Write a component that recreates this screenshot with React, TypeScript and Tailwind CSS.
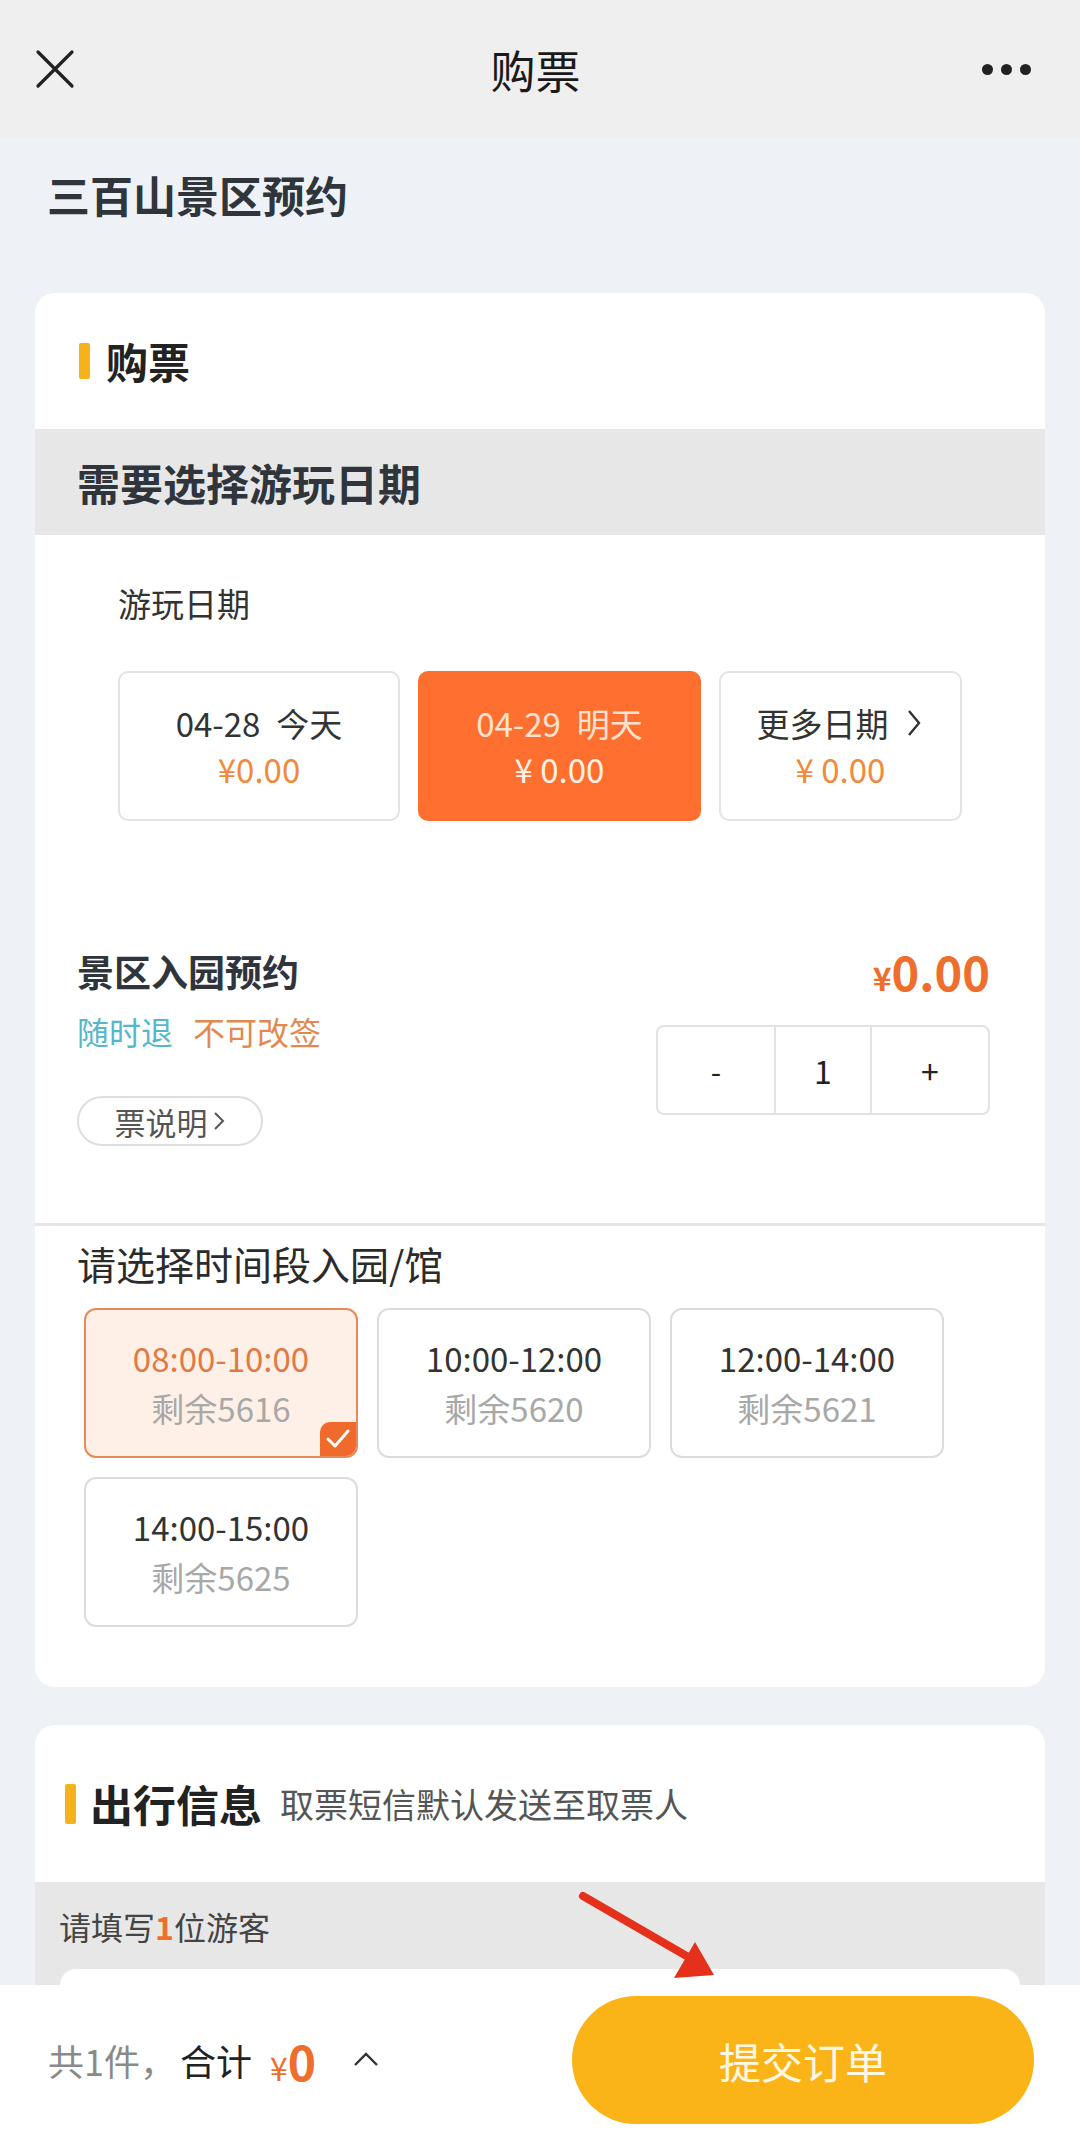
import React from "react";

const FONT = { fontFamily: '"Noto Sans CJK SC", "Noto Sans", sans-serif' };

function DateBox({ label, day, price, active, w, more }: { label: string; day?: string; price: string; active?: boolean; w: string; more?: boolean }) {
  return (
    <div
      className={`${w} h-[150px] rounded-[10px] flex flex-col items-center justify-center ${
        active ? "bg-[#ff6f2f] border-2 border-[#ff6f2f]" : "bg-white border-2 border-[#e3e3e3]"
      }`}
    >
      <div className={`flex items-center text-[33px] leading-[42px] ${active ? "text-[#ffe3cf]" : "text-[#333]"}`}>
        <span>{label}</span>
        {day && <span className="ml-[16px]">{day}</span>}
        {more && (
          <svg width="22" height="32" viewBox="0 0 22 32" className="ml-[14px]">
            <path d="M6 4 L16 16 L6 28" fill="none" stroke="#333" strokeWidth="2.4" />
          </svg>
        )}
      </div>
      <div className={`mt-[4px] text-[33px] leading-[42px] ${active ? "text-[#fff1e6]" : "text-[#ef8a3e]"}`}>{price}</div>
    </div>
  );
}

function Slot({ time, left, selected }: { time: string; left: string; selected?: boolean }) {
  return (
    <div
      className={`relative w-[274px] h-[150px] rounded-[12px] flex flex-col items-center justify-center overflow-hidden ${
        selected ? "bg-[#fff0e7] border-2 border-[#e48a5c]" : "bg-white border-2 border-[#dcdcdc]"
      }`}
    >
      <div className={`text-[33px] leading-[50px] ${selected ? "text-[#e07a45]" : "text-[#333]"}`}>{time}</div>
      <div className="text-[33px] leading-[50px] text-[#a8a8a8]">{left}</div>
      {selected && (
        <div className="absolute right-0 bottom-0 w-[36px] h-[34px] bg-[#f06a2c] rounded-tl-[10px] flex items-center justify-center">
          <svg width="26" height="22" viewBox="0 0 26 22">
            <path d="M3 11 L10 18 L23 3" fill="none" stroke="#fff" strokeWidth="3" strokeLinecap="round" strokeLinejoin="round" />
          </svg>
        </div>
      )}
    </div>
  );
}

export default function App() {
  return (
    <div className="relative w-[1080px] h-[2135px] overflow-hidden bg-[#eef2f7]" style={FONT}>
      {/* Nav bar */}
      <div className="h-[138px] bg-[#efefef] flex items-center justify-between px-[35px]">
        <svg width="40" height="40" viewBox="0 0 40 40">
          <path d="M3 3 L37 37 M37 3 L3 37" stroke="#222" strokeWidth="3.2" strokeLinecap="round" />
        </svg>
        <div className="text-[45px] text-[#1a1a1a] leading-none ml-[14px]">购票</div>
        <div className="flex gap-[8px] items-center pr-[14px]">
          <span className="w-[11px] h-[11px] rounded-full bg-[#222]" />
          <span className="w-[11px] h-[11px] rounded-full bg-[#222]" />
          <span className="w-[11px] h-[11px] rounded-full bg-[#222]" />
        </div>
      </div>

      {/* Page title */}
      <div className="h-[120px] flex items-center pl-[47px] pb-[8px]">
        <div className="text-[43px] font-bold text-[#2f353b] leading-none">三百山景区预约</div>
      </div>

      {/* Card 1 */}
      <div className="mx-[35px] mt-[35px] bg-white rounded-[20px] overflow-hidden">
        <div className="h-[136px] flex items-center pl-[44px]">
          <span className="w-[11px] h-[36px] bg-[#f5b21c] rounded-[2px]" />
          <span className="ml-[16px] text-[42px] font-bold text-[#222] leading-none">购票</span>
        </div>
        <div className="h-[106px] bg-[#e7e7e7] flex items-center pl-[42px]">
          <span className="text-[43px] font-bold text-[#2f353b] leading-none">需要选择游玩日期</span>
        </div>
        <div className="pl-[83px] pt-[48px] text-[33px] text-[#333] leading-[40px]">游玩日期</div>
        <div className="flex gap-[18px] pl-[83px] mt-[48px]">
          <DateBox w="w-[282px]" label="04-28" day="今天" price="¥0.00" />
          <DateBox w="w-[283px]" label="04-29" day="明天" price="¥ 0.00" active />
          <DateBox w="w-[243px]" label="更多日期" price="¥ 0.00" more />
        </div>

        {/* Ticket row */}
        <div className="flex justify-between pl-[42px] pr-[55px] mt-[122px]">
          <div className="flex flex-col">
            <div className="text-[37px] font-bold text-[#2f353b] leading-[56px]">景区入园预约</div>
            <div className="flex gap-[20px] text-[32px] leading-[44px] mt-[10px]">
              <span className="text-[#55b6cc]">随时退</span>
              <span className="text-[#e08a52]">不可改签</span>
            </div>
            <div className="mt-[43px] w-[186px] h-[50px] rounded-full border-2 border-[#dedede] flex items-center justify-center text-[31px] text-[#555] leading-none">
              票说明
              <svg width="14" height="22" viewBox="0 0 14 22" className="ml-[4px]">
                <path d="M3 3 L11 11 L3 19" fill="none" stroke="#555" strokeWidth="2" />
              </svg>
            </div>
          </div>
          <div className="flex flex-col items-end">
            <div className="flex items-baseline text-[#ee6e2d] font-bold leading-[56px]">
              <span className="text-[32px]">¥</span>
              <span className="text-[47px]">0.00</span>
            </div>
            <div className="mt-[20px] flex h-[90px] border-2 border-[#e2e2e2] rounded-[8px] overflow-hidden">
              <div className="w-[116px] flex items-center justify-center text-[30px] text-[#222]">-</div>
              <div className="w-[98px] flex items-center justify-center text-[32px] text-[#222] border-x-2 border-[#e2e2e2]">1</div>
              <div className="w-[116px] flex items-center justify-center text-[32px] text-[#222]">+</div>
            </div>
          </div>
        </div>

        <div className="mt-[77px] h-[3px] bg-[#e6e6e6]" />

        <div className="pl-[42px] pt-[12px] text-[39px] text-[#2b2b2b] leading-[50px]">请选择时间段入园/馆</div>
        <div className="pl-[49px] pt-[20px] pb-[60px] grid grid-cols-[274px_274px_274px] gap-x-[19px] gap-y-[19px]">
          <Slot time="08:00-10:00" left="剩余5616" selected />
          <Slot time="10:00-12:00" left="剩余5620" />
          <Slot time="12:00-14:00" left="剩余5621" />
          <Slot time="14:00-15:00" left="剩余5625" />
        </div>
      </div>

      {/* Card 2 */}
      <div className="mx-[35px] mt-[38px] bg-white rounded-[20px] overflow-hidden">
        <div className="h-[157px] flex items-center pl-[30px]">
          <span className="w-[11px] h-[40px] bg-[#f5b21c] rounded-[2px]" />
          <span className="ml-[14px] text-[43px] font-bold text-[#222] leading-none">出行信息</span>
          <span className="ml-[18px] text-[34px] text-[#555] leading-none">取票短信默认发送至取票人</span>
        </div>
        <div className="h-[87px] bg-[#e7e7e7] flex items-center pl-[24px] text-[32px] text-[#444]">
          请填写<span className="text-[#ef6e2d] font-bold">1</span>位游客
        </div>
        <div className="bg-[#e7e7e7] px-[25px]">
          <div className="h-[200px] bg-white rounded-t-[16px]" />
        </div>
      </div>

      {/* Bottom bar */}
      <div className="absolute left-0 right-0 bottom-0 h-[150px] bg-white flex items-center justify-between pl-[48px] pr-[46px]">
        <div className="flex items-center">
          <span className="text-[36px] text-[#8a8a8a]">共1件，</span>
          <span className="text-[36px] text-[#222] ml-[4px]">合计</span>
          <span className="ml-[18px] flex items-baseline text-[#ee6e2d]">
            <span className="text-[32px]">¥</span>
            <span className="text-[48px] font-bold">0</span>
          </span>
          <svg width="28" height="20" viewBox="0 0 28 20" className="ml-[36px]">
            <path d="M3 15 L14 4 L25 15" fill="none" stroke="#333" strokeWidth="2.4" />
          </svg>
        </div>
        <div className="w-[462px] h-[128px] rounded-full bg-[#fbb418] flex items-center justify-center text-[42px] text-[#fff7e6]">
          提交订单
        </div>
      </div>

      {/* Red arrow annotation */}
      <svg className="absolute left-0 top-0 pointer-events-none" width="1080" height="2135" viewBox="0 0 1080 2135">
        <path d="M583 1896 L690 1958" stroke="#e5301c" strokeWidth="8" strokeLinecap="round" />
        <path d="M714 1975 L674 1978 L695 1942 Z" fill="#e5301c" />
      </svg>
    </div>
  );
}
